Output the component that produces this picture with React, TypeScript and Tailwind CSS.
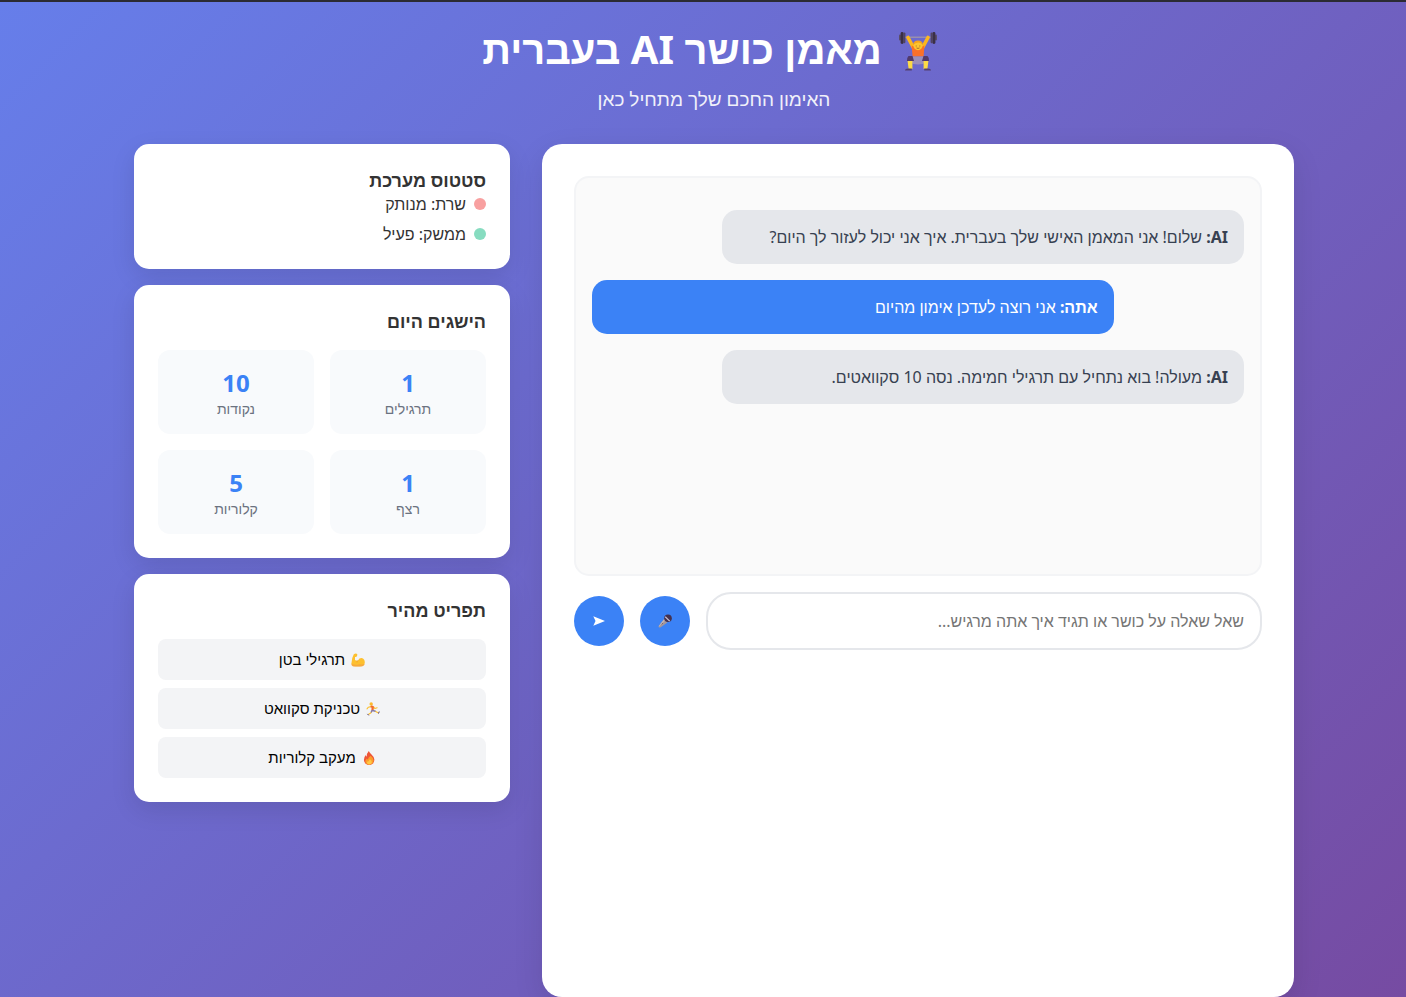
import { useState } from "react";
import type { ReactNode } from "react";

function LifterIcon() {
  return (
    <svg viewBox="0 0 38 40" className="inline-block h-10 w-[38px]" aria-hidden="true">
      <path d="M6 6.2h26" stroke="#a59aa8" strokeWidth="1.2" />
      <rect x="0" y="3.5" width="2" height="6" rx="1" fill="#5a4d68" />
      <rect x="1.6" y="1" width="3" height="12" rx="1.4" fill="#3b3045" />
      <rect x="4.4" y="1.6" width="2" height="10.6" rx="1" fill="#51445f" />
      <rect x="36" y="3.5" width="2" height="6" rx="1" fill="#5a4d68" />
      <rect x="33.4" y="1" width="3" height="12" rx="1.4" fill="#3b3045" />
      <rect x="31.6" y="1.6" width="2" height="10.6" rx="1" fill="#51445f" />
      <path d="M9 6.500l5.600 10.500M29 6.500l-5.600 10.500" stroke="#fcb61e" strokeWidth="3.600" strokeLinecap="round" />
      <path d="M12.600 14.400q6.400 3 12.800 0l-.800 11.200H13.600z" fill="#fb7028" />
      <circle cx="19" cy="14.600" r="4.600" fill="#fdc52f" />
      <path d="M14.200 14q0-4.600 4.800-4.600t4.800 4.600q-2.200-2.600-4.800-2.400t-4.800 2.400" fill="#f5a31c" />
      <path d="M17.200 14.500v1M20.800 14.500v1M17.500 17q1.500.800 3 0" stroke="#93572b" strokeWidth=".8" fill="none" />
      <path d="M13 25.500h12l3 5.500q-9 5-18 0z" fill="#9b8fbb" />
      <path d="M9.500 25h4l1.500 5H8q-.500-3 1.500-5M28.500 25h-4l-1.500 5h7q.500-3-1.500-5" fill="#513a6b" />
      <path d="M8.600 30h4.800v8H9.600zM29.400 30h-4.800v8h3.800z" fill="#fddb45" />
      <path d="M6 39.600q0-2 3.400-2.100h3.400v2.100zM32 39.600q0-2-3.400-2.100h-3.400v2.100z" fill="#544072" />
    </svg>
  );
}

function BicepIcon() {
  return (
    <svg viewBox="0 0 14 14" className="h-3.5 w-3.5" aria-hidden="true">
      <path d="M2.800 1.200Q4.400.200 5.700.700q1.100.600.500 1.900l-.700 1.100q-1.100.500-1.500 0L4 7q1.500.900 3 .400Q8.200 4.900 10.600 5q3.200.500 3.200 4.500 0 3.100-2.500 3.700-4.600.600-9.400 0Q.300 12.700.400 10.400.600 5 2.800 1.200z" fill="#fdc02f" />
      <path d="M.4 10.600q4 2.200 8.200.600 2.800.800 5.100-.500-.400 2.100-2.400 2.500-4.600.600-9.400 0Q.400 12.700.4 10.600z" fill="#f2994a" opacity=".6" />
      <path d="M7 7.400Q5.900 8.100 6 9.400" stroke="#e5862f" strokeWidth=".6" fill="none" />
    </svg>
  );
}

function RunnerIcon() {
  return (
    <svg viewBox="0 0 14 14" className="h-3.5 w-3.5" fill="none" strokeLinecap="round" strokeLinejoin="round" aria-hidden="true">
      <circle cx="5.200" cy="2" r="1.700" fill="#fdba2c" />
      <path d="M4.800 4.600L2.400 5.200 1 6.800M7.600 4.900l1.300 1.700 2.200-.800" stroke="#fdc02f" strokeWidth="1.100" />
      <path d="M5.700 4.700l1.100.300-.300 3" stroke="#f36b2b" strokeWidth="2.300" />
      <path d="M6.700 8.500l2.600.700M5.900 8.700l-.700 1.500" stroke="#8379a6" strokeWidth="1.500" />
      <path d="M9.700 9.500l2.300 1.200M5 10.800l-2.300 1.500" stroke="#fdc02f" strokeWidth="1.100" />
      <path d="M13.100 9.900l-.500 1.300M1.700 12.200l.800.900" stroke="#544072" strokeWidth="1" />
    </svg>
  );
}

function FireIcon() {
  return (
    <svg viewBox="0 0 14 14" className="h-3.5 w-3.5" aria-hidden="true">
      <path d="M6.800 0q.8 1.800 2.700 3.400Q12.400 5.800 12.400 8.800q-.2 4.800-5.200 5.100-5-.2-5.300-5 0-3 2-4.900.1 1.200.8 1.700Q4.700 2.200 6.800 0z" fill="#ee5536" />
      <path d="M8.600 4.800q3.200 2.300 3 5-.4 3.700-4.300 3.900-3.900-.2-4-3.600.2-1.700 1.600-2.700.2.900.9 1.100Q6.300 6.200 8.600 4.800z" fill="#fb9c2c" />
      <path d="M7.900 8.200q2.300 1.500 1.900 3.400-.5 1.900-2.600 1.900-2.100-.2-2.200-2 .2-1 1.100-1.500l.6.500q.2-1.500 1.200-2.300z" fill="#ffc845" />
    </svg>
  );
}

function MicIcon() {
  return (
    <svg viewBox="0 0 14 14" className="h-3.5 w-3.5" aria-hidden="true">
      <path d="M6.200 5l3.200 3.400-7 5q-1 .4-1.600-.2-.4-.6.100-1.400z" fill="#a3979c" />
      <path d="M6.200 5l1.200 1.200-6.500 6.600-.100-.800z" fill="#c2b5b5" />
      <circle cx="10" cy="4.200" r="3.800" fill="#44314f" />
      <path d="M7.600 2.200l4.600 4.600-1 .800-4.400-4.400z" fill="#c8bfd0" />
      <path d="M3.800 10.300l1-1.200" stroke="#5a4d68" strokeWidth=".8" />
    </svg>
  );
}

function SendIcon() {
  return (
    <svg viewBox="0 0 12 10" className="h-2.5 w-3" aria-hidden="true">
      <path d="M.3.300L12 5 .3 9.700 2.500 5z" fill="#fff" />
    </svg>
  );
}

const stats = [
  { value: "1", label: "תרגילים" },
  { value: "10", label: "נקודות" },
  { value: "1", label: "רצף" },
  { value: "5", label: "קלוריות" },
];

const quickActions = [
  { icon: <BicepIcon />, label: "תרגילי בטן" },
  { icon: <RunnerIcon />, label: "טכניקת סקוואט" },
  { icon: <FireIcon />, label: "מעקב קלוריות" },
];

const messages = [
  { from: "ai", text: "שלום! אני המאמן האישי שלך בעברית. איך אני יכול לעזור לך היום?" },
  { from: "user", text: "אני רוצה לעדכן אימון מהיום" },
  { from: "ai", text: "מעולה! בוא נתחיל עם תרגילי חמימה. נסה 10 סקוואטים." },
];

function Card({ title, children }: { title: string; children: ReactNode }) {
  return (
    <section className="rounded-[15px] bg-white p-6 shadow-[0_8px_25px_rgba(0,0,0,0.1)]">
      <h2 className="text-lg leading-[25px] font-bold">{title}</h2>
      {children}
    </section>
  );
}

export default function App() {
  const [draft, setDraft] = useState("");

  return (
    <div
      dir="rtl"
      className="flex min-h-screen flex-col border-t-2 border-[#2b2b33] bg-[linear-gradient(135deg,#667eea_0%,#764ba2_100%)] pl-[22px] font-['Noto_Sans',sans-serif] text-base leading-[22px] text-[#333]"
    >
      <div className="mx-auto flex w-full max-w-[1200px] grow flex-col px-5 pt-5">
        <header className="mb-8 text-center text-white">
          <h1 className="mb-2.5 flex items-center justify-center gap-2 text-[40px] leading-[54px] font-bold">
            <span className="flex w-14 justify-center pt-1">
              <LifterIcon />
            </span>
            מאמן כושר AI בעברית
          </h1>
          <p className="text-[19px] leading-[26px] opacity-90">האימון החכם שלך מתחיל כאן</p>
        </header>

        <div className="grid grow grid-cols-1 gap-8 md:grid-cols-[2fr_1fr]">
          <main className="rounded-[20px] bg-white p-8 shadow-[0_10px_30px_rgba(0,0,0,0.1)]">
            <div className="mb-4 flex h-[400px] flex-col gap-4 overflow-y-auto rounded-[15px] border-2 border-gray-100 bg-[#fafafa] px-4 py-8">
              {messages.map((m) => (
                <p
                  key={m.text}
                  className={
                    m.from === "user"
                      ? "w-4/5 self-end rounded-[15px] bg-[#3b82f6] p-4 text-white"
                      : "w-4/5 self-start rounded-[15px] bg-[#e5e7eb] p-4 text-[#374151]"
                  }
                >
                  <strong>{m.from === "user" ? "אתה:" : "AI:"}</strong> {m.text}
                </p>
              ))}
            </div>

            <form className="flex items-center gap-4" onSubmit={(e) => e.preventDefault()}>
              <input
                type="text"
                aria-label="שאלה למאמן"
                value={draft}
                onChange={(e) => setDraft(e.target.value)}
                placeholder="שאל שאלה על כושר או תגיד איך אתה מרגיש..."
                className="min-w-0 grow rounded-[25px] border-2 border-[#e5e7eb] p-4 placeholder:text-[#757575]"
              />
              <button type="button" aria-label="הקלטה" className="flex size-[50px] shrink-0 items-center justify-center rounded-full bg-[#3b82f6]">
                <MicIcon />
              </button>
              <button type="submit" aria-label="שליחה" className="flex size-[50px] shrink-0 items-center justify-center rounded-full bg-[#3b82f6]">
                <SendIcon />
              </button>
            </form>
          </main>

          <aside className="flex flex-col gap-4 self-start">
            <Card title="סטטוס מערכת">
              <ul className="flex flex-col gap-2">
                <li className="flex items-center gap-2">
                  <span className="size-3 rounded-full bg-[#f8a0a0]" />
                  שרת: מנותק
                </li>
                <li className="flex items-center gap-2">
                  <span className="size-3 rounded-full bg-[#87dcc0]" />
                  ממשק: פעיל
                </li>
              </ul>
            </Card>

            <Card title="הישגים היום">
              <dl className="mt-4 grid grid-cols-2 gap-4">
                {stats.map((s) => (
                  <div key={s.label} className="flex flex-col-reverse rounded-xl bg-[#f8fafc] p-4 text-center">
                    <dt className="text-sm leading-[19px] text-[#6b7280]">{s.label}</dt>
                    <dd className="text-2xl leading-[33px] font-bold text-[#3b82f6]">{s.value}</dd>
                  </div>
                ))}
              </dl>
            </Card>

            <Card title="תפריט מהיר">
              <div className="mt-4 flex flex-col gap-2">
                {quickActions.map((a) => (
                  <button
                    key={a.label}
                    type="button"
                    className="flex items-center justify-center gap-1.5 rounded-lg bg-[#f3f4f6] px-3 py-[11px] text-[15px] leading-[19px] text-black"
                  >
                    {a.icon}
                    {a.label}
                  </button>
                ))}
              </div>
            </Card>
          </aside>
        </div>
      </div>
    </div>
  );
}
